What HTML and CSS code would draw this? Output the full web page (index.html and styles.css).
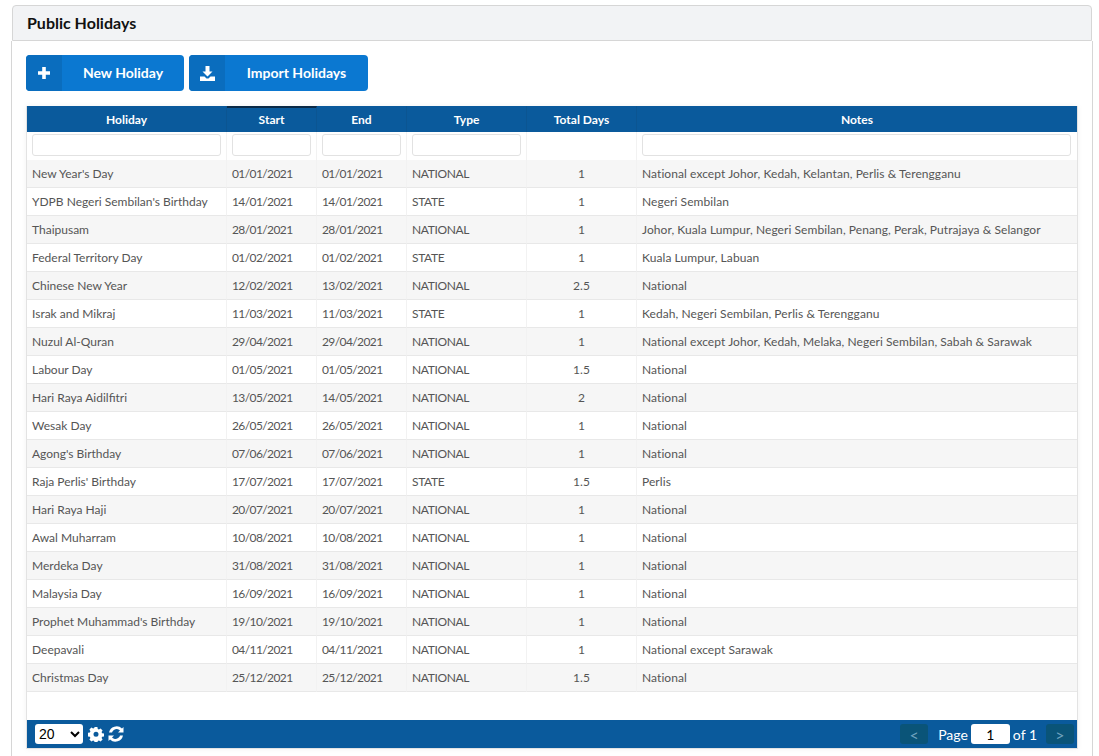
FILE: index.html
```html
<!DOCTYPE html>
<html lang="en">
<head>
<meta charset="utf-8">
<title>Public Holidays</title>
<link rel="stylesheet" href="styles.css">
</head>
<body>
<div class="panel-head"><h1 class="title">Public Holidays</h1></div>
<div class="panel-body">
  <div class="actions">
    <button class="btn btn-new"><span class="btn-icon"><svg width="14" height="14" viewBox="0 0 14 14"><path d="M5.2 1h3.6v4.2H13v3.6H8.800V13H5.200V8.800H1V5.200h4.200z" fill="#fff"/></svg></span><span class="btn-label">New Holiday</span></button>
    <button class="btn btn-import"><span class="btn-icon"><svg width="15" height="15" viewBox="0 0 15 15"><path d="M5.500 0h4v5.500h3L7.500 10.500 2.500 5.500h3z" fill="#fff"/><path d="M0 10.500h4.500L6.500 12.500h2l2-2H15V15H0z" fill="#fff"/></svg></span><span class="btn-label">Import Holidays</span></button>
  </div>
  <div class="grid">
    <table class="holidays">
      <colgroup><col class="c1"><col class="c2"><col class="c3"><col class="c4"><col class="c5"><col class="c6"></colgroup>
      <thead>
        <tr class="heads"><th>Holiday</th><th class="sorted">Start</th><th>End</th><th>Type</th><th>Total Days</th><th>Notes</th></tr>
        <tr class="filters"><td><input class="filter"></td><td><input class="filter"></td><td><input class="filter"></td><td><input class="filter"></td><td></td><td><input class="filter"></td></tr>
      </thead>
      <tbody>
        <tr><td>New Year's Day</td><td>01/01/2021</td><td>01/01/2021</td><td>NATIONAL</td><td class="num">1</td><td>National except Johor, Kedah, Kelantan, Perlis &amp; Terengganu</td></tr>
        <tr><td>YDPB Negeri Sembilan's Birthday</td><td>14/01/2021</td><td>14/01/2021</td><td>STATE</td><td class="num">1</td><td>Negeri Sembilan</td></tr>
        <tr><td>Thaipusam</td><td>28/01/2021</td><td>28/01/2021</td><td>NATIONAL</td><td class="num">1</td><td>Johor, Kuala Lumpur, Negeri Sembilan, Penang, Perak, Putrajaya &amp; Selangor</td></tr>
        <tr><td>Federal Territory Day</td><td>01/02/2021</td><td>01/02/2021</td><td>STATE</td><td class="num">1</td><td>Kuala Lumpur, Labuan</td></tr>
        <tr><td>Chinese New Year</td><td>12/02/2021</td><td>13/02/2021</td><td>NATIONAL</td><td class="num">2.5</td><td>National</td></tr>
        <tr><td>Israk and Mikraj</td><td>11/03/2021</td><td>11/03/2021</td><td>STATE</td><td class="num">1</td><td>Kedah, Negeri Sembilan, Perlis &amp; Terengganu</td></tr>
        <tr><td>Nuzul Al-Quran</td><td>29/04/2021</td><td>29/04/2021</td><td>NATIONAL</td><td class="num">1</td><td>National except Johor, Kedah, Melaka, Negeri Sembilan, Sabah &amp; Sarawak</td></tr>
        <tr><td>Labour Day</td><td>01/05/2021</td><td>01/05/2021</td><td>NATIONAL</td><td class="num">1.5</td><td>National</td></tr>
        <tr><td>Hari Raya Aidilfitri</td><td>13/05/2021</td><td>14/05/2021</td><td>NATIONAL</td><td class="num">2</td><td>National</td></tr>
        <tr><td>Wesak Day</td><td>26/05/2021</td><td>26/05/2021</td><td>NATIONAL</td><td class="num">1</td><td>National</td></tr>
        <tr><td>Agong's Birthday</td><td>07/06/2021</td><td>07/06/2021</td><td>NATIONAL</td><td class="num">1</td><td>National</td></tr>
        <tr><td>Raja Perlis' Birthday</td><td>17/07/2021</td><td>17/07/2021</td><td>STATE</td><td class="num">1.5</td><td>Perlis</td></tr>
        <tr><td>Hari Raya Haji</td><td>20/07/2021</td><td>20/07/2021</td><td>NATIONAL</td><td class="num">1</td><td>National</td></tr>
        <tr><td>Awal Muharram</td><td>10/08/2021</td><td>10/08/2021</td><td>NATIONAL</td><td class="num">1</td><td>National</td></tr>
        <tr><td>Merdeka Day</td><td>31/08/2021</td><td>31/08/2021</td><td>NATIONAL</td><td class="num">1</td><td>National</td></tr>
        <tr><td>Malaysia Day</td><td>16/09/2021</td><td>16/09/2021</td><td>NATIONAL</td><td class="num">1</td><td>National</td></tr>
        <tr><td>Prophet Muhammad's Birthday</td><td>19/10/2021</td><td>19/10/2021</td><td>NATIONAL</td><td class="num">1</td><td>National</td></tr>
        <tr><td>Deepavali</td><td>04/11/2021</td><td>04/11/2021</td><td>NATIONAL</td><td class="num">1</td><td>National except Sarawak</td></tr>
        <tr><td>Christmas Day</td><td>25/12/2021</td><td>25/12/2021</td><td>NATIONAL</td><td class="num">1.5</td><td>National</td></tr>
      </tbody>
    </table>
    <div class="pager">
      <div class="pager-left">
        <select class="size"><option>20</option></select>
        <svg class="tool" width="16" height="16" viewBox="0 0 16 16"><path fill="#fff" fill-rule="evenodd" d="M6.600 1h2.800l.4 1.900 1.100.5 1.700-1 2 2-1 1.700.5 1.100 1.900.4v2.800l-1.900.4-.5 1.100 1 1.700-2 2-1.700-1-1.100.5-.4 1.400H6.600l-.4-1.400-1.100-.5-1.700 1-2-2 1-1.700-.5-1.100-1.900-.4V6.800l1.900-.4.5-1.100-1-1.700 2-2 1.700 1 1.100-.5zM8 5.700a2.500 2.500 0 1 0 0 5 2.500 2.500 0 0 0 0-5z"/></svg>
        <svg class="tool" width="16" height="16" viewBox="0 0 16 16"><path fill="#fff" d="M15.500 1v5.500H10l2-2A4.800 4.800 0 0 0 4 6.500H1A7.800 7.800 0 0 1 14 2.500zM.5 15V9.500H6l-2 2a4.800 4.800 0 0 0 8-2h3a7.800 7.800 0 0 1-13 4z"/></svg>
      </div>
      <div class="pager-right">
        <button class="nav">&lt;</button>
        <span class="page-text">Page</span>
        <input class="page-input" value="1">
        <span class="page-text">of 1</span>
        <button class="nav">&gt;</button>
      </div>
    </div>
  </div>
</div>
</body>
</html>
```
FILE: styles.css
```css
html, body { margin: 0; padding: 0; background: #fff; height: 756px; overflow: hidden; }
body { font-family: "Lato", sans-serif; font-size: 12px; color: #555; padding: 5px 6px 0 11px; box-sizing: border-box; }
.panel-head { margin-left: 1px; margin-right: 1px; height: 36px; box-sizing: border-box; background: #f2f3f5; border: 1px solid #d6d6d6; border-radius: 4px 4px 0 0; display: flex; align-items: center; padding: 0 0 2px 14px; }
.title { margin: 0; font-size: 16px; font-weight: 700; color: #111; }
.panel-body { border: 1px solid #d6d6d6; border-top: 0; padding: 14px 14px 0; height: 720px; box-sizing: border-box; }
.actions { display: flex; gap: 5px; height: 36px; margin-bottom: 15px; }
.btn { display: flex; align-items: stretch; padding: 0; border: 0; border-radius: 4px; background: #0b78d1; color: #fff; font: 700 14px "Lato", sans-serif; overflow: hidden; }
.btn-new { width: 158px; }
.btn-import { width: 179px; }
.btn-icon { width: 36px; background: #0a6dbe; display: flex; align-items: center; justify-content: center; }
.btn-label { flex: 1; display: flex; align-items: center; justify-content: center; padding-bottom: 2px; }
.grid { border: 1px solid #e3e3e3; border-top: 0; height: 643px; box-sizing: border-box; display: flex; flex-direction: column; justify-content: space-between; width: 1052px; box-shadow: 0 0 6px rgba(0,0,0,.05); }
.holidays { border-collapse: separate; border-spacing: 0; table-layout: fixed; width: 1050px; }
.c1 { width: 200px; } .c2, .c3 { width: 90px; } .c4 { width: 120px; } .c5 { width: 110px; } .c6 { width: 440px; }
.heads th { height: 26px; padding: 0; background: #0a5a9c; color: #fff; font-size: 12px; font-weight: 700; border-right: 1px solid #0b5592; box-sizing: border-box; }
.heads th.sorted { border-top: 2px solid #0b2a47; padding-bottom: 2px; }
.filters td { height: 28px; padding: 0 5px 2px; background: #fff; border-right: 1px solid #f2f2f2; box-sizing: border-box; vertical-align: middle; }
.filters td:last-child { padding-right: 6px; }
.filter { display: block; width: 100%; height: 22px; box-sizing: border-box; border: 1px solid #e2e2e2; border-radius: 3px; background: #fff; margin-top: 0; }
tbody tr { height: 28px; }
tbody td { padding: 0 5px 1px; border-bottom: 1px solid #e8e8e8; border-right: 1px solid #f2f2f2; color: #555; box-sizing: border-box; white-space: nowrap; overflow: hidden; }
tbody tr:nth-child(odd) td { background: #f6f6f6; }
tbody td:nth-child(2), tbody td:nth-child(3) { letter-spacing: -.6px; }
tbody td:nth-child(4) { letter-spacing: -.35px; }
tbody td:nth-child(6) { letter-spacing: .07px; }
tbody td:last-child, .heads th:last-child, .filters td:last-child { border-right: 0; }
.num { text-align: center; }
.pager { height: 28px; background: #0a5a9c; display: flex; justify-content: space-between; align-items: center; padding: 0 3px 0 8px; flex: none; }
.pager-left, .pager-right { display: flex; align-items: center; }
.size { width: 48px; height: 20px; border: 0; border-radius: 3px; background: #fff; color: #000; font: 14px "Liberation Sans", sans-serif; margin-right: 5px; }
.tool { margin-right: 4px; }
.nav { width: 28px; height: 20px; border: 0; border-radius: 3px; background: #0a5478; color: #6fa3bf; font: 16px "Lato", sans-serif; padding: 0; }
.page-text { color: #fff; font-size: 14px; margin: 0 3px; }
.page-text:first-of-type { margin-left: 10px; }
.page-text:last-of-type { margin-right: 9px; }
.page-input { width: 39px; height: 20px; box-sizing: border-box; border: 0; border-radius: 3px; background: #fff; text-align: center; font: 14px "Lato", sans-serif; color: #000; padding: 0; }
```
